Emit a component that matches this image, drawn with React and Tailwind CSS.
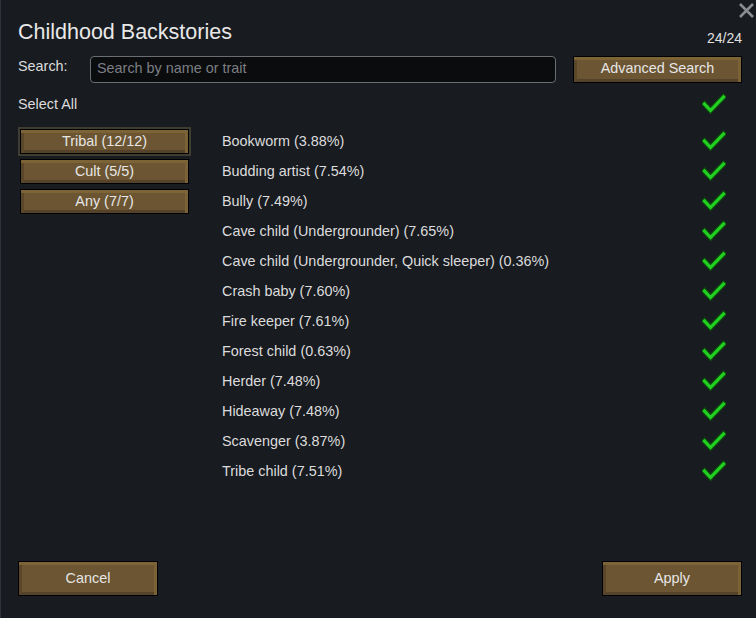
const ITEMS = [
  'Bookworm (3.88%)',
  'Budding artist (7.54%)',
  'Bully (7.49%)',
  'Cave child (Undergrounder) (7.65%)',
  'Cave child (Undergrounder, Quick sleeper) (0.36%)',
  'Crash baby (7.60%)',
  'Fire keeper (7.61%)',
  'Forest child (0.63%)',
  'Herder (7.48%)',
  'Hideaway (7.48%)',
  'Scavenger (3.87%)',
  'Tribe child (7.51%)',
]

const GROUPS = [
  { label: 'Tribal (12/12)', active: true },
  { label: 'Cult (5/5)' },
  { label: 'Any (7/7)' },
]

const BEVEL =
  'border border-black bg-[#6b5532] text-[#e6e6e6] shadow-[inset_0_3px_0_#7d6436,inset_-3px_0_0_#7a6136,inset_3px_0_0_#5a4729,inset_0_-3px_0_#54432a]'

function Check() {
  return (
    <svg width="24" height="22" viewBox="0 0 24 22" className="block">
      <polyline points="2.5,11 8.5,17.5 21.5,4" fill="none" stroke="#0d4a0d" strokeWidth="5.6" strokeLinecap="square" />
      <polyline points="2.5,11 8.5,17.5 21.5,4" fill="none" stroke="#22d022" strokeWidth="3.2" strokeLinecap="square" />
    </svg>
  )
}

function Button({ children, className = '' }) {
  return (
    <button className={`${BEVEL} flex items-center justify-center ${className}`}>
      {children}
    </button>
  )
}

export default function App() {
  return (
    <div
      className="relative w-[756px] h-[618px] bg-[#181b20] border-l border-[#2e333b] text-[#dcdcdc] overflow-hidden"
      style={{ fontFamily: '"Liberation Sans", Arial, sans-serif' }}
    >
      {/* Close */}
      <svg className="absolute right-[1px] top-[2px]" width="17" height="17" viewBox="0 0 17 17">
        <path d="M2 2 L15 15 M15 2 L2 15" stroke="#8a8c8f" strokeWidth="2.6" />
      </svg>

      <div className="flex items-end justify-between pl-[17px] pr-[14px] pt-[20px]">
        <h1 className="text-[21.5px] leading-[25px] text-[#e8e8e8]">Childhood Backstories</h1>
        <span className="text-[14px] leading-[16px] mb-[-1px] text-[#e0e0e0]">24/24</span>
      </div>

      {/* Search */}
      <div className="flex items-center mt-[11px] pl-[17px] pr-[14px] h-[26px]">
        <span className="text-[14.4px] w-[72px] mt-[-4px]">Search:</span>
        <div className="w-[466px] h-[27px] rounded-[4px] border border-[#6a6d72] bg-[#0b0c0e] flex items-center px-[6px] text-[14.4px] text-[#7c7f84]">
          Search by name or trait
        </div>
        <Button className="ml-auto w-[169px] h-[27px] text-[14.4px]">Advanced Search</Button>
      </div>

      {/* Select all */}
      <div className="flex items-center justify-between h-[30px] mt-[7px] pl-[17px] pr-[30px]">
        <span className="text-[14.4px] mt-[2px]">Select All</span>
        <Check />
      </div>

      {/* Body */}
      <div className="flex mt-[7px] pr-[30px]">
        <div className="w-[221px] pl-[17px] flex flex-col">
          {GROUPS.map((g) => (
            <div
              key={g.label}
              className={`h-[30px] w-[174px] flex items-start ${g.active ? '' : 'pl-[2px] pt-[3px]'}`}
            >
              {g.active ? (
                <div className="border-[2px] border-[#3f3d30] mt-[1px]">
                  <Button className="w-[169px] h-[25px] text-[14.4px]">{g.label}</Button>
                </div>
              ) : (
                <Button className="w-[169px] h-[25px] text-[14.4px]">{g.label}</Button>
              )}
            </div>
          ))}
        </div>

        <div className="flex-1 flex flex-col">
          {ITEMS.map((item) => (
            <div key={item} className="flex items-center justify-between h-[30px]">
              <span className="text-[14.4px] mt-[2px]">{item}</span>
              <Check />
            </div>
          ))}
        </div>
      </div>

      {/* Footer */}
      <div className="absolute left-[17px] right-[14px] bottom-[22px] flex justify-between">
        <Button className="w-[140px] h-[35px] text-[14.4px]">Cancel</Button>
        <Button className="w-[140px] h-[35px] text-[14.4px]">Apply</Button>
      </div>
    </div>
  )
}
